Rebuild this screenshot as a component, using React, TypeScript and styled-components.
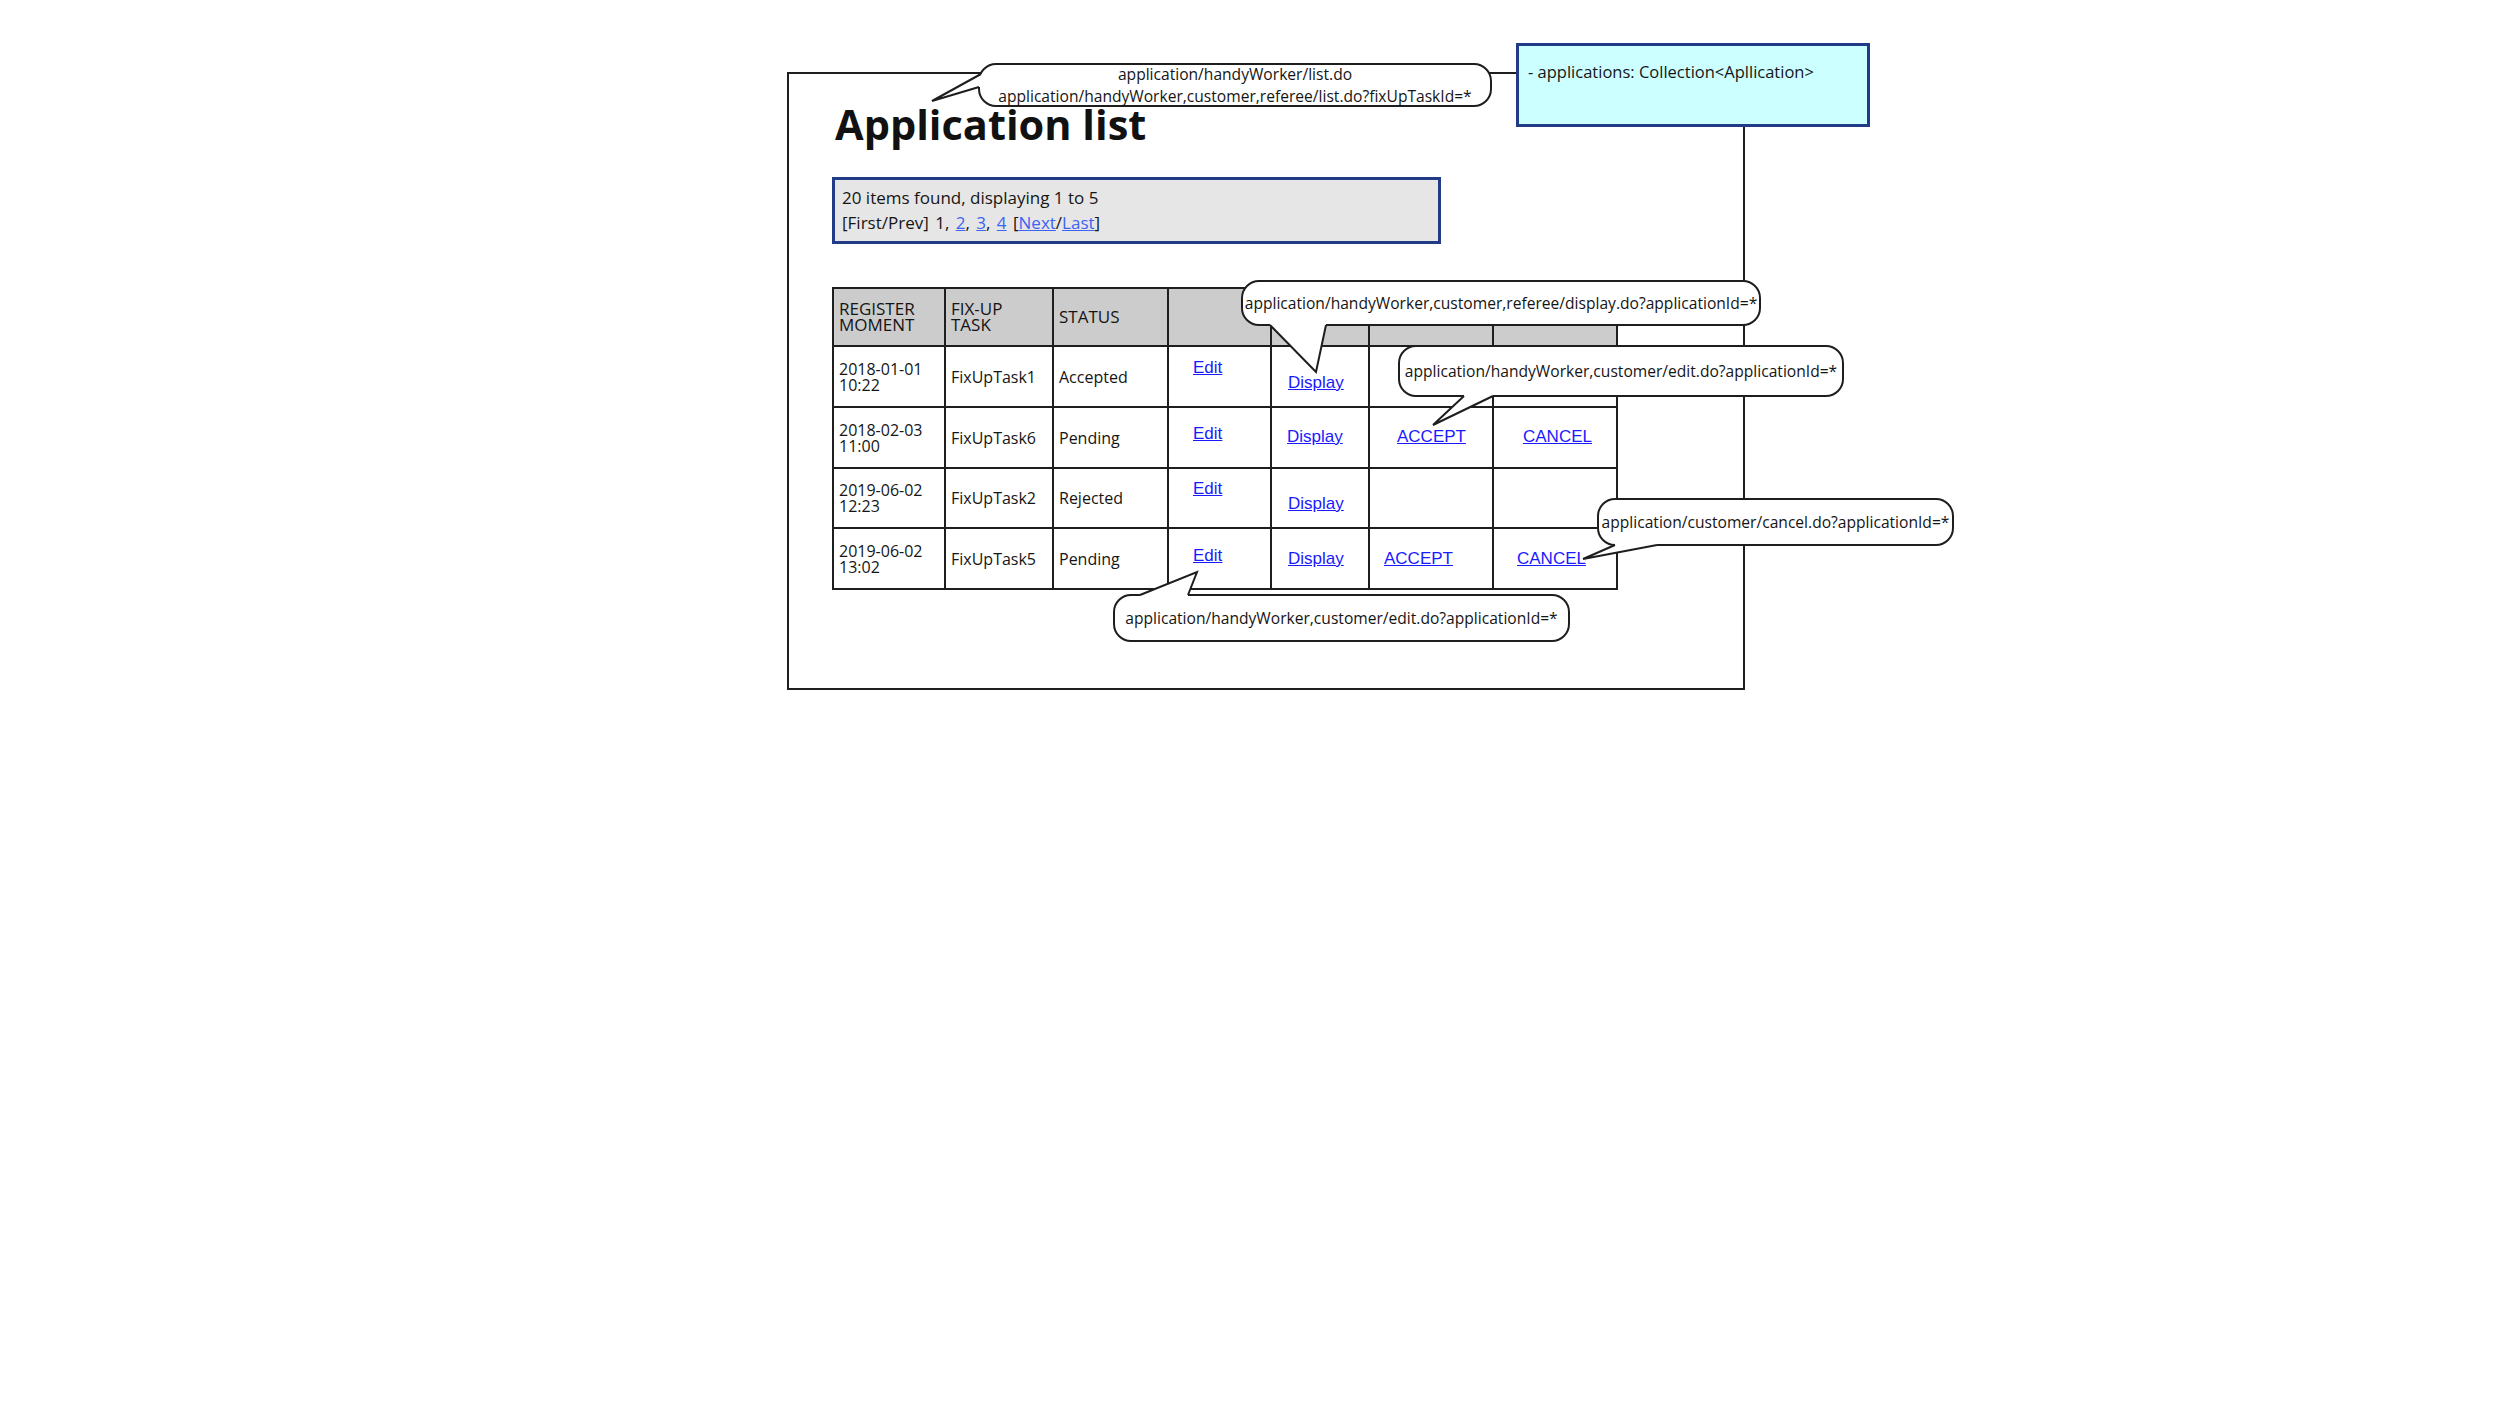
import React from "react";
import styled, { createGlobalStyle } from "styled-components";

const GlobalStyle = createGlobalStyle`
  html, body {
    margin: 0;
    padding: 0;
    background: #ffffff;
  }
  body {
    font-family: "Comic Sans MS", "Open Sans", sans-serif;
    color: #151515;
  }
`;

const INK = "#1e1e1e";

const Canvas = styled.div`
  position: relative;
  width: 2499px;
  height: 1407px;
  overflow: hidden;
  background: #ffffff;
`;

const Frame = styled.section`
  box-sizing: border-box;
  width: 958px;
  height: 618px;
  margin: 72px 0 0 787px;
  padding: 29px 0 0 43px;
  border: 2px solid ${INK};
  display: flex;
  flex-direction: column;
  align-items: flex-start;
`;

const Title = styled.h1`
  margin: 0;
  padding-left: 3px;
  font-size: 41.5px;
  line-height: 43px;
  font-weight: 700;
  color: #111;
`;

const PageBox = styled.div`
  box-sizing: border-box;
  width: 609px;
  height: 67px;
  margin-top: 31px;
  padding: 5px 0 0 7px;
  border: 3px solid #213b87;
  background: #e6e6e6;
  font-size: 17px;
  line-height: 25px;
  white-space: nowrap;
`;

const PagerLine = styled.div`
  word-spacing: 2px;
`;

const PageLink = styled.a`
  color: #3d63f2;
  text-decoration: underline;
  cursor: pointer;
`;

const Table = styled.div`
  display: grid;
  margin-top: 43px;
  grid-template-columns: 112px 108px 115px 103px 98px 124px 124px;
  grid-template-rows: 58px 61px 61px 60px 61px;
  border-top: 2px solid ${INK};
  border-left: 2px solid ${INK};
`;

const Cell = styled.div<{ $head?: boolean }>`
  box-sizing: border-box;
  display: flex;
  flex-direction: column;
  justify-content: center;
  padding-left: 5px;
  border-right: 2px solid ${INK};
  border-bottom: 2px solid ${INK};
  background: ${(p) => (p.$head ? "#cccccc" : "#ffffff")};
  font-size: ${(p) => (p.$head ? "17px" : "16px")};
  line-height: 16px;
  text-transform: ${(p) => (p.$head ? "uppercase" : "none")};
  white-space: nowrap;
`;

const CellLine = styled.span`
  display: block;
  height: 16px;
  line-height: 16px;
`;

const LinkCell = styled(Cell)<{ $top: number; $left: number }>`
  justify-content: flex-start;
  align-items: flex-start;
  padding-top: ${(p) => p.$top}px;
  padding-left: ${(p) => p.$left}px;
`;

const TableLink = styled.a`
  font-family: "Liberation Sans", Arial, sans-serif;
  font-size: 17px;
  line-height: 20px;
  color: #1a1aff;
  text-decoration: underline;
  cursor: pointer;
`;

const Note = styled.div`
  position: absolute;
  left: 1516px;
  top: 43px;
  width: 354px;
  height: 84px;
  box-sizing: border-box;
  padding: 16px 0 0 9px;
  border: 3px solid #213b87;
  background: #ccffff;
  font-size: 16.5px;
  line-height: 20px;
  white-space: nowrap;
  z-index: 1;
`;

const Bubble = styled.div<{ $x: number; $y: number; $w: number; $h: number }>`
  position: absolute;
  left: ${(p) => p.$x}px;
  top: ${(p) => p.$y}px;
  width: ${(p) => p.$w}px;
  height: ${(p) => p.$h}px;
  box-sizing: border-box;
  display: flex;
  flex-direction: column;
  align-items: center;
  justify-content: center;
  border: 2px solid ${INK};
  border-radius: 18px;
  background: #ffffff;
  font-size: 15.6px;
  line-height: 22px;
  white-space: nowrap;
  z-index: 2;
`;

const TailSvg = styled.svg<{ $x: number; $y: number }>`
  position: absolute;
  left: ${(p) => p.$x}px;
  top: ${(p) => p.$y}px;
  overflow: visible;
  pointer-events: none;
  z-index: 3;
`;

type Pt = [number, number];
type Side = "left" | "top" | "bottom";

interface BalloonProps {
  x: number;
  y: number;
  w: number;
  h: number;
  lines: string[];
  tail: [Pt, Pt, Pt];
  side: Side;
}

const inset: Record<Side, Pt> = {
  left: [6, 0],
  top: [0, 6],
  bottom: [0, -6],
};

const Balloon = ({ x, y, w, h, lines, tail, side }: BalloonProps) => {
  const [a, tip, b] = tail;
  const [dx, dy] = inset[side];
  const pts: Pt[] = [a, tip, b, [b[0] + dx, b[1] + dy], [a[0] + dx, a[1] + dy]];
  const minX = Math.min(...pts.map((p) => p[0])) - 4;
  const minY = Math.min(...pts.map((p) => p[1])) - 4;
  const maxX = Math.max(...pts.map((p) => p[0])) + 4;
  const maxY = Math.max(...pts.map((p) => p[1])) + 4;
  const rel = (p: Pt) => `${p[0] - minX},${p[1] - minY}`;
  return (
    <>
      <Bubble $x={x} $y={y} $w={w} $h={h}>
        {lines.map((l) => (
          <span key={l}>{l}</span>
        ))}
      </Bubble>
      <TailSvg
        $x={minX}
        $y={minY}
        width={maxX - minX}
        height={maxY - minY}
      >
        <polygon points={pts.map(rel).join(" ")} fill="#ffffff" />
        <polyline
          points={[a, tip, b].map(rel).join(" ")}
          fill="none"
          stroke={INK}
          strokeWidth={2}
        />
      </TailSvg>
    </>
  );
};

type LinkPos = { label: string; top: number; left: number } | null;

interface Row {
  moment: [string, string];
  task: string;
  status: string;
  links: LinkPos[];
}

const rows: Row[] = [
  {
    moment: ["2018-01-01", "10:22"],
    task: "FixUpTask1",
    status: "Accepted",
    links: [
      { label: "Edit", top: 11, left: 24 },
      { label: "Display", top: 26, left: 16 },
      null,
      null,
    ],
  },
  {
    moment: ["2018-02-03", "11:00"],
    task: "FixUpTask6",
    status: "Pending",
    links: [
      { label: "Edit", top: 16, left: 24 },
      { label: "Display", top: 19, left: 15 },
      { label: "ACCEPT", top: 19, left: 27 },
      { label: "CANCEL", top: 19, left: 29 },
    ],
  },
  {
    moment: ["2019-06-02", "12:23"],
    task: "FixUpTask2",
    status: "Rejected",
    links: [
      { label: "Edit", top: 10, left: 24 },
      { label: "Display", top: 25, left: 16 },
      null,
      null,
    ],
  },
  {
    moment: ["2019-06-02", "13:02"],
    task: "FixUpTask5",
    status: "Pending",
    links: [
      { label: "Edit", top: 17, left: 24 },
      { label: "Display", top: 20, left: 16 },
      { label: "ACCEPT", top: 20, left: 14 },
      { label: "CANCEL", top: 20, left: 23 },
    ],
  },
];

const balloons: BalloonProps[] = [
  {
    x: 978,
    y: 63,
    w: 514,
    h: 44,
    lines: [
      "application/handyWorker/list.do",
      "application/handyWorker,customer,referee/list.do?fixUpTaskId=*",
    ],
    side: "left",
    tail: [
      [981, 74],
      [932, 101],
      [979, 87],
    ],
  },
  {
    x: 1241,
    y: 280,
    w: 520,
    h: 46,
    lines: ["application/handyWorker,customer,referee/display.do?applicationId=*"],
    side: "bottom",
    tail: [
      [1270, 325],
      [1316, 372],
      [1326, 325],
    ],
  },
  {
    x: 1398,
    y: 345,
    w: 446,
    h: 52,
    lines: ["application/handyWorker,customer/edit.do?applicationId=*"],
    side: "bottom",
    tail: [
      [1464, 396],
      [1433, 425],
      [1493, 396],
    ],
  },
  {
    x: 1597,
    y: 498,
    w: 357,
    h: 48,
    lines: ["application/customer/cancel.do?applicationId=*"],
    side: "bottom",
    tail: [
      [1615, 545],
      [1583, 559],
      [1657, 545],
    ],
  },
  {
    x: 1113,
    y: 594,
    w: 457,
    h: 48,
    lines: ["application/handyWorker,customer/edit.do?applicationId=*"],
    side: "top",
    tail: [
      [1140, 595],
      [1197, 572],
      [1188, 595],
    ],
  },
];

const headers: string[][] = [
  ["Register", "Moment"],
  ["Fix-up", "Task"],
  ["Status"],
  [],
  [],
  [],
  [],
];

const App = () => {
  return (
    <>
      <GlobalStyle />
      <Canvas>
        <Frame>
          <Title>Application list</Title>
          <PageBox>
            <div>20 items found, displaying 1 to 5</div>
            <PagerLine>
              [First/Prev] 1, <PageLink>2</PageLink>, <PageLink>3</PageLink>,{" "}
              <PageLink>4</PageLink> [<PageLink>Next</PageLink>/
              <PageLink>Last</PageLink>]
            </PagerLine>
          </PageBox>
          <Table>
            {headers.map((h, i) => (
              <Cell $head key={`h${i}`}>
                {h.map((line) => (
                  <CellLine key={line}>{line}</CellLine>
                ))}
              </Cell>
            ))}
            {rows.map((r, ri) => (
              <React.Fragment key={ri}>
                <Cell>
                  <CellLine>{r.moment[0]}</CellLine>
                  <CellLine>{r.moment[1]}</CellLine>
                </Cell>
                <Cell>{r.task}</Cell>
                <Cell>{r.status}</Cell>
                {r.links.map((l, li) =>
                  l ? (
                    <LinkCell key={li} $top={l.top} $left={l.left}>
                      <TableLink>{l.label}</TableLink>
                    </LinkCell>
                  ) : (
                    <Cell key={li} />
                  )
                )}
              </React.Fragment>
            ))}
          </Table>
        </Frame>
        <Note>- applications: Collection&lt;Apllication&gt;</Note>
        {balloons.map((b, i) => (
          <Balloon key={i} {...b} />
        ))}
      </Canvas>
    </>
  );
};

export default App;
